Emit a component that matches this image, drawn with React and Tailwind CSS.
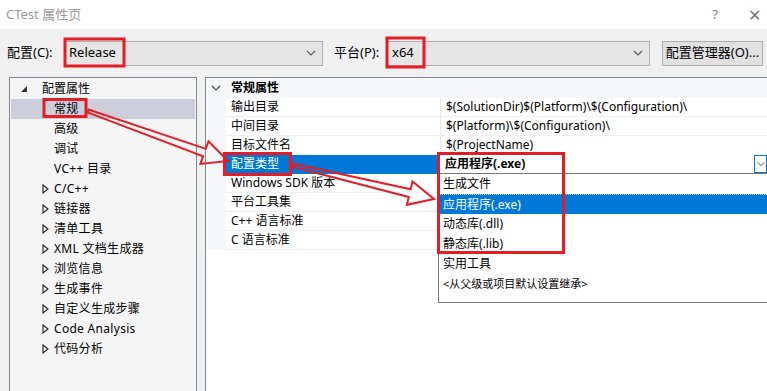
import React from 'react';

const font = "font-['Noto_Sans','Noto_Sans_CJK_SC',sans-serif]";

const tree = [
  ['常规', false, true],
  ['高级', false],
  ['调试', false],
  ['VC++ 目录', false],
  ['C/C++', true],
  ['链接器', true],
  ['清单工具', true],
  ['XML 文档生成器', true],
  ['浏览信息', true],
  ['生成事件', true],
  ['自定义生成步骤', true],
  ['Code Analysis', true],
  ['代码分析', true],
];

const rows = [
  ['输出目录', '$(SolutionDir)$(Platform)\\$(Configuration)\\'],
  ['中间目录', '$(Platform)\\$(Configuration)\\'],
  ['目标文件名', '$(ProjectName)'],
  ['配置类型', '', true],
  ['Windows SDK 版本', ''],
  ['平台工具集', ''],
  ['C++ 语言标准', ''],
  ['C 语言标准', ''],
];

const options = ['生成文件', '应用程序(.exe)', '动态库(.dll)', '静态库(.lib)', '实用工具', '<从父级或项目默认设置继承>'];

function Chevron({ className }) {
  return (
    <svg width="10" height="6" viewBox="0 0 10 6" className={className}>
      <path d="M1 1 L5 5 L9 1" fill="none" stroke="currentColor" strokeWidth="1.1" />
    </svg>
  );
}

function Combo({ value, width }) {
  return (
    <div className={`${width} h-[25px] bg-[#e5e5e5] border border-[#adadad] flex items-center justify-between pl-[4px] pr-[6px]`}>
      <span className="text-[13px] text-black">{value}</span>
      <Chevron className="text-[#555]" />
    </div>
  );
}

function arrow(x1, y1, x2, y2) {
  const dx = x2 - x1, dy = y2 - y1;
  const len = Math.hypot(dx, dy);
  const ux = dx / len, uy = dy / len;
  const px = -uy, py = ux;
  const head = 25, tail = 1.5, neck = 4, wing = 12;
  const bx = x2 - ux * head, by = y2 - uy * head;
  const pts = [
    [x1 + px * tail, y1 + py * tail],
    [bx + px * neck, by + py * neck],
    [bx + px * wing, by + py * wing],
    [x2, y2],
    [bx - px * wing, by - py * wing],
    [bx - px * neck, by - py * neck],
    [x1 - px * tail, y1 - py * tail],
  ];
  return pts.map((p) => p.join(',')).join(' ');
}

export default function App() {
  return (
    <div className={`relative w-[767px] h-[391px] bg-[#f0f0f0] flex flex-col overflow-hidden ${font} text-[12px] text-black`}>
      {/* title bar */}
      <div className="h-[29px] bg-white flex items-center justify-between pl-[6px] pr-[4px]">
        <span className="text-[13px] text-[#999]">CTest 属性页</span>
        <div className="flex items-center gap-[30px] text-[#777] pr-[2px]">
          <span className="text-[13px]">?</span>
          <span className="text-[16px] font-light">✕</span>
        </div>
      </div>

      {/* toolbar */}
      <div className="h-[48px] flex items-center pl-[7px]">
        <span className="text-[13px] w-[57px]">配置(C):</span>
        <Combo value="Release" width="w-[259px]" />
        <span className="text-[13px] ml-[11px] w-[53px]">平台(P):</span>
        <Combo value="x64" width="w-[263px]" />
        <div className="ml-[12px] w-[101px] h-[25px] bg-[#e1e1e1] border border-[#adadad] flex items-center justify-center text-[13px]">
          配置管理器(O)...
        </div>
      </div>

      {/* main */}
      <div className="flex-1 flex pl-[9px] gap-[8px]">
        <div className="w-[188px] border border-b-0 border-[#828790] bg-[#f5f5f5] pt-[1px]">
          <div className="h-[20px] flex items-center pl-[10px]">
            <svg width="8" height="8" viewBox="0 0 8 8" className="mr-[16px]"><path d="M7 1 L7 7 L1 7 Z" fill="#333" /></svg>
            <span className="-ml-[2px]">配置属性</span>
          </div>
          {tree.map(([label, expand, sel]) => (
            <div key={label} className={`h-[20px] flex items-center ${sel ? 'bg-[#cccedb]' : ''} mx-[1px]`}>
              <div className="w-[43px] flex justify-end pr-[5px]">
                {expand && (
                  <svg width="7" height="10" viewBox="0 0 7 10"><path d="M1 1 L6 5 L1 9 Z" fill="none" stroke="#222" strokeWidth="1.1" /></svg>
                )}
              </div>
              <span className="tracking-[0.3px]">{label}</span>
            </div>
          ))}
        </div>

        <div className="flex-1 border-l border-t border-[#828790] bg-white">
          <div className="h-[20px] flex items-center bg-[#f5f7fa]">
            <div className="w-[20px] flex justify-center"><Chevron className="text-[#444]" /></div>
            <span className="font-bold ml-[5px]">常规属性</span>
          </div>
          {rows.map(([name, value, sel]) => (
            <div key={name} className="h-[19px] flex">
              <div className="w-[20px] bg-[#f5f7fa]" />
              <div className={`w-[215px] flex items-center pl-[5px] border-b border-[#f0f0f0] border-r border-r-[#e8e8e8] ${sel ? 'bg-[#0078d7] text-white border-b-[#0078d7]' : ''}`}>
                {name}
              </div>
              <div className="flex-1 flex items-center pl-[5px] border-b border-[#f0f0f0]">{value}</div>
            </div>
          ))}
        </div>
      </div>

      {/* open dropdown */}
      <div className="absolute left-[437px] top-[154px] w-[330px] h-[20px] bg-white flex items-center justify-between border-b border-[#777]">
        <span className="font-bold pl-[8px]">应用程序(.exe)</span>
        <div className="w-[13px] h-[18px] border border-[#0078d7] flex items-center justify-center">
          <Chevron className="text-[#333] w-[8px]" />
        </div>
      </div>
      <div className="absolute left-[438px] top-[174px] w-[329px] h-[129px] bg-white border-l border-b border-[#777]">
        {options.map((o, i) => (
          <div
            key={o}
            className={`h-[20px] flex items-center pl-[4px] ${i === 1 ? 'bg-[#0078d7] text-white border-t border-dotted border-[#ccc]' : ''} ${i === 5 ? 'text-[11px]' : ''}`}
          >
            {o}
          </div>
        ))}
      </div>

      {/* annotations */}
      <svg className="absolute inset-0 pointer-events-none" width="767" height="391">
        <g fill="none" stroke="#e51c23" strokeWidth="3">
          <rect x="65" y="39" width="59" height="27" />
          <rect x="387" y="38" width="37" height="29" />
          <rect x="44" y="99.5" width="42" height="17" />
          <rect x="224.5" y="153.5" width="66" height="21" />
          <rect x="438.5" y="153.5" width="125" height="99" />
        </g>
        <g fill="none" stroke="#e51c23" strokeWidth="2" strokeLinejoin="miter">
          <polygon points={arrow(88, 111, 228, 161)} />
          <polygon points={arrow(292, 165, 434, 199)} />
        </g>
      </svg>
    </div>
  );
}
